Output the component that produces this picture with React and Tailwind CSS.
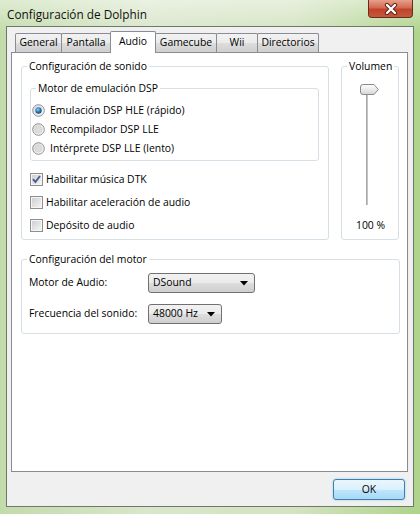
import React from "react";

const tabs = [
  { label: "General", w: "w-[47px]" },
  { label: "Pantalla", w: "w-[50px]" },
  { label: "Audio", w: "w-[46px]", active: true },
  { label: "Gamecube", w: "w-[62px]" },
  { label: "Wii", w: "w-[42px]" },
  { label: "Directorios", w: "w-[62px]" },
];

const Group = ({ label, className, children }) => (
  <div className={`relative border border-[#d5dfe5] rounded-[3px] ${className}`}>
    <span className="absolute -top-[8px] left-[5px] bg-white px-[2px] leading-[14px] whitespace-nowrap">
      {label}
    </span>
    {children}
  </div>
);

const Radio = ({ checked, label }) => (
  <div className="flex items-center h-[19px] gap-[5px]">
    <svg width="13" height="13" viewBox="0 0 13 13">
      <defs>
        <linearGradient id="rg" x1="0" y1="0" x2="1" y2="1">
          <stop offset="0" stopColor="#d9d9d9" />
          <stop offset="1" stopColor="#fbfbfb" />
        </linearGradient>
        <radialGradient id="rb" cx="0.4" cy="0.35" r="0.7">
          <stop offset="0" stopColor="#8fd3f7" />
          <stop offset="0.5" stopColor="#2f7fb8" />
          <stop offset="1" stopColor="#173f6b" />
        </radialGradient>
      </defs>
      <circle cx="6.5" cy="6.5" r="5.8" fill="url(#rg)" stroke="#8c8f93" strokeWidth="1" />
      {checked ? (
        <circle cx="6.5" cy="6.5" r="3.2" fill="url(#rb)" />
      ) : (
        <circle cx="6.5" cy="6.5" r="3.6" fill="#dcdcdc" stroke="#cfcfcf" strokeWidth="0.6" />
      )}
    </svg>
    <span>{label}</span>
  </div>
);

const Check = ({ checked, label }) => (
  <div className="flex items-center h-[23px] gap-[3px]">
    <svg width="13" height="13" viewBox="0 0 13 13">
      <defs>
        <linearGradient id="cg" x1="0" y1="0" x2="1" y2="1">
          <stop offset="0" stopColor="#cfcfcf" />
          <stop offset="1" stopColor="#f4f4f4" />
        </linearGradient>
      </defs>
      <rect x="0.5" y="0.5" width="12" height="12" fill="#f5f5f5" stroke="#8e8f8f" />
      <rect x="2" y="2" width="9" height="9" fill="url(#cg)" />
      {checked && (
        <path d="M3 6.2 L5.4 9 L10 3" fill="none" stroke="#4a5f97" strokeWidth="2" />
      )}
    </svg>
    <span>{label}</span>
  </div>
);

const Select = ({ value, w }) => (
  <div
    className={`${w} h-[20px] flex items-center justify-between pl-[4px] pr-[6px] rounded-[3px] border border-[#707070] bg-[linear-gradient(180deg,#f2f2f2_0%,#ebebeb_50%,#dddddd_51%,#cfcfcf_100%)]`}
  >
    <span>{value}</span>
    <svg width="8" height="5" viewBox="0 0 8 5">
      <path d="M0 0 H8 L4 4.5 Z" fill="#000" />
    </svg>
  </div>
);

export default function App() {
  return (
    <div className="w-[420px] h-[514px] flex flex-col font-['Open_Sans',sans-serif] text-[10.4px] text-black bg-[linear-gradient(180deg,rgba(255,255,255,0.45)_0px,rgba(255,255,255,0)_34px),linear-gradient(90deg,#c3dbab_0%,#d9e6cb_35%,#d4e3c2_70%,#aed38a_100%)]">
      {/* title bar */}
      <div className="h-[26px] flex items-start justify-between pl-[7px] pr-[7px]">
        <span className="pt-[6px] text-[11.8px] leading-[16px] text-[#111]">
          Configuración de Dolphin
        </span>
        <div className="w-[45px] h-[18px] rounded-b-[4px] border border-t-0 border-[#6a2a1e] bg-[linear-gradient(180deg,#e8a08c_0%,#d36a52_45%,#c0432a_55%,#c4593f_100%)] flex items-center justify-center">
          <svg width="14" height="12" viewBox="0 0 14 12">
            <path d="M3 2 L11 10 M11 2 L3 10" stroke="#5a2016" strokeWidth="4.2" strokeLinecap="round" />
            <path d="M3 2 L11 10 M11 2 L3 10" stroke="#fff" strokeWidth="2.4" strokeLinecap="round" />
          </svg>
        </div>
      </div>

      {/* client area */}
      <div className="ml-[6px] w-[408px] h-[481px] border border-[#6d7a6a] bg-[#f0f0f0] flex flex-col">
        <div className="pt-[4px] pl-[8px] h-[25px] flex items-end">
          {tabs.map((t, i) =>
            t.active ? (
              <div
                key={t.label}
                className={`${t.w} ${i ? "-ml-px" : ""} h-[22px] -mb-px relative z-10 bg-white border border-b-0 border-[#898c95] rounded-t-[2px] flex items-center justify-center pb-[2px]`}
              >
                {t.label}
              </div>
            ) : (
              <div
                key={t.label}
                className={`${t.w} ${i ? "-ml-px" : ""} h-[19px] bg-[linear-gradient(180deg,#f2f2f2_0%,#ebebeb_50%,#dddddd_51%,#cfcfcf_100%)] border border-b-0 border-[#898c95] rounded-t-[2px] flex items-center justify-center`}
              >
                {t.label}
              </div>
            )
          )}
        </div>

        {/* tab panel */}
        <div className="ml-[4px] w-[397px] h-[420px] border border-[#898c95] bg-white pl-[9px] pt-[13px]">
          <div className="flex gap-[12px]">
            <Group label="Configuración de sonido" className="w-[308px] h-[174px] pl-[8px] pt-[21px]">
              <Group label="Motor de emulación DSP" className="w-[289px] h-[73px] pl-[1px] pt-[12px]">
                <Radio checked label="Emulación DSP HLE (rápido)" />
                <Radio label="Recompilador DSP LLE" />
                <Radio label="Intérprete DSP LLE (lento)" />
              </Group>
              <div className="mt-[7px]">
                <Check checked label="Habilitar música DTK" />
                <Check label="Habilitar aceleración de audio" />
                <Check label="Depósito de audio" />
              </div>
            </Group>

            <Group label="Volumen" className="w-[58px] h-[174px] pt-[17px]">
              <div className="pl-[18px]">
                <svg width="19" height="11" viewBox="0 0 19 11">
                  <defs>
                    <linearGradient id="th" x1="0" y1="0" x2="0" y2="1">
                      <stop offset="0" stopColor="#ffffff" />
                      <stop offset="1" stopColor="#d6d6d6" />
                    </linearGradient>
                  </defs>
                  <path
                    d="M0.5 3 Q0.5 0.5 3 0.5 H14 L18.3 5.5 L14 10.5 H3 Q0.5 10.5 0.5 8 Z"
                    fill="url(#th)"
                    stroke="#8a8a8a"
                  />
                </svg>
                <div className="ml-[6px] w-[2px] h-[110px] bg-[#c4c4c4] border-l border-[#a8a8a8]" />
              </div>
              <div className="mt-[13px] text-center pl-[1px]">100 %</div>
            </Group>
          </div>

          <Group label="Configuración del motor" className="mt-[19px] w-[379px] h-[75px] pl-[7px] pt-[13px]">
            <div className="flex items-center h-[20px]">
              <span className="w-[119px]">Motor de Audio:</span>
              <Select value="DSound" w="w-[107px]" />
            </div>
            <div className="flex items-center h-[20px] mt-[11px]">
              <span className="w-[119px]">Frecuencia del sonido:</span>
              <Select value="48000 Hz" w="w-[74px]" />
            </div>
          </Group>
        </div>

        <div className="flex justify-end pr-[8px] mt-[7px]">
          <div className="w-[72px] h-[21px] rounded-[3px] border border-[#3c7fb1] bg-[linear-gradient(180deg,#eaf6fd_0%,#d9f0fc_50%,#bee6fd_51%,#a7d9f5_100%)] shadow-[0_0_2px_#7fc4ec] flex items-center justify-center">
            OK
          </div>
        </div>
      </div>
    </div>
  );
}
